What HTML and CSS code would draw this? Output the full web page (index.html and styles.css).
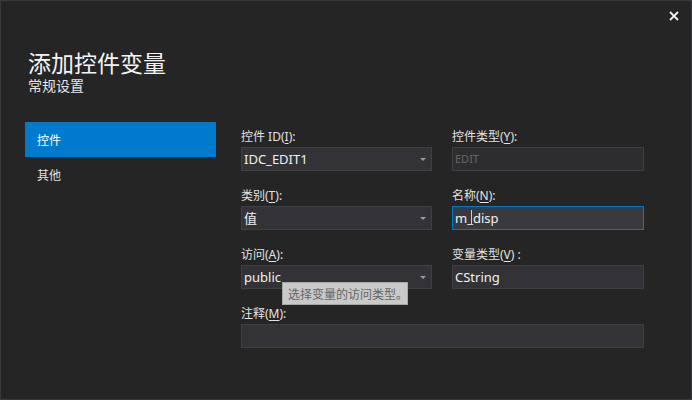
FILE: index.html
```html
<!DOCTYPE html>
<html lang="zh">
<head>
<meta charset="utf-8">
<link rel="stylesheet" href="styles.css">
</head>
<body>
<div class="window">
  <button class="close" aria-label="关闭">
    <svg width="10" height="10" viewBox="0 0 10 10"><path d="M1 1L9 9M9 1L1 9" stroke="#f1f1f1" stroke-width="1.8"/></svg>
  </button>
  <header class="header">
    <h1 class="title">添加控件变量</h1>
    <div class="subtitle">常规设置</div>
  </header>
  <div class="main">
    <nav class="sidebar">
      <div class="nav-item active">控件</div>
      <div class="nav-item">其他</div>
    </nav>
    <div class="form">
      <div class="field">
        <label class="label">控件 ID(<u>I</u>):</label>
        <div class="box combo"><span class="val">IDC_EDIT1</span><span class="arrow"></span></div>
      </div>
      <div class="field">
        <label class="label">控件类型(<u>Y</u>):</label>
        <div class="box disabled"><span class="val">EDIT</span></div>
      </div>
      <div class="field">
        <label class="label">类别(<u>T</u>):</label>
        <div class="box combo"><span class="val">值</span><span class="arrow"></span></div>
      </div>
      <div class="field">
        <label class="label">名称(<u>N</u>):</label>
        <div class="box focused"><span class="val">m_disp</span><span class="ibeam"></span></div>
      </div>
      <div class="field">
        <label class="label">访问(<u>A</u>):</label>
        <div class="box combo"><span class="val">public</span><span class="arrow"></span>
          <div class="tooltip">选择变量的访问类型。</div>
        </div>
      </div>
      <div class="field">
        <label class="label">变量类型(<u>V</u>) :</label>
        <div class="box"><span class="val">CString</span></div>
      </div>
      <div class="field wide">
        <label class="label">注释(<u>M</u>):</label>
        <div class="box"></div>
      </div>
    </div>
  </div>
</div>
</body>
</html>
```
FILE: styles.css
```css
* { box-sizing: border-box; }
html, body { margin: 0; padding: 0; background: #252526; }
body {
  font-family: "Noto Sans", "Noto Sans CJK SC", sans-serif;
  color: #f1f1f1;
}
.window {
  position: relative;
  width: 692px;
  height: 400px;
  background: #252526;
  border: 1px solid #3a3a3d;
  overflow: hidden;
}
.close {
  position: absolute;
  right: 11px;
  top: 9px;
  width: 12px;
  height: 12px;
  padding: 0;
  border: 0;
  background: transparent;
  display: flex;
  align-items: center;
  justify-content: center;
}
.header {
  padding: 47px 0 0 27px;
}
.title {
  margin: 0;
  font-family: "Noto Sans CJK SC", sans-serif;
  font-weight: 400;
  font-size: 23px;
  line-height: 28px;
  color: #f4f4f4;
}
.subtitle {
  font-family: "Noto Sans CJK SC", sans-serif;
  font-size: 14px;
  line-height: 16px;
  margin-top: 1px;
  color: #e6e6e6;
}
.main {
  display: flex;
  margin-top: 29px;
  padding-left: 24px;
}
.sidebar {
  width: 191px;
  flex: none;
}
.nav-item {
  height: 35px;
  line-height: 35px;
  padding-left: 12px;
  font-family: "Noto Sans CJK SC", sans-serif;
  font-size: 12px;
  color: #e0e0e0;
}
.nav-item.active {
  background: #007acc;
  color: #ffffff;
}
.form {
  margin-left: 25px;
  margin-top: 6px;
  display: grid;
  grid-template-columns: 191px 192px;
  column-gap: 20px;
  row-gap: 16px;
  width: 403px;
}
.field.wide { grid-column: 1 / span 2; }
.label {
  display: block;
  height: 18px;
  line-height: 18px;
  margin-bottom: 1px;
  font-size: 12px;
  color: #e2e2e2;
  font-family: "Noto Sans", "Noto Sans CJK SC", sans-serif;
}
.label u { text-underline-offset: 2px; }
.box {
  position: relative;
  height: 24px;
  background: #333337;
  border: 1px solid #3f3f46;
  display: flex;
  align-items: center;
  padding-left: 2px;
  font-size: 13px;
  color: #f1f1f1;
}
.val { line-height: 22px; }
.disabled {
  background: #2d2d30;
  color: #656565;
  font-size: 11px;
}
.focused {
  border-color: #007acc;
  background: #3a3a3e;
}
.ibeam {
  position: absolute;
  left: 18px;
  top: 3px;
  width: 1px;
  height: 15px;
  background: #cfcfcf;
}
.arrow {
  position: absolute;
  right: 5px;
  top: 10px;
  width: 0;
  height: 0;
  border-left: 3px solid transparent;
  border-right: 3px solid transparent;
  border-top: 3px solid #9a9a9a;
}
.tooltip {
  position: absolute;
  left: 40px;
  top: 16px;
  width: 126px;
  height: 23px;
  line-height: 21px;
  padding-left: 5px;
  background: #c9c9c9;
  border: 1px solid #a8a8a8;
  color: #666666;
  font-family: "Noto Sans CJK SC", sans-serif;
  font-size: 12px;
  white-space: nowrap;
  z-index: 2;
}
```
